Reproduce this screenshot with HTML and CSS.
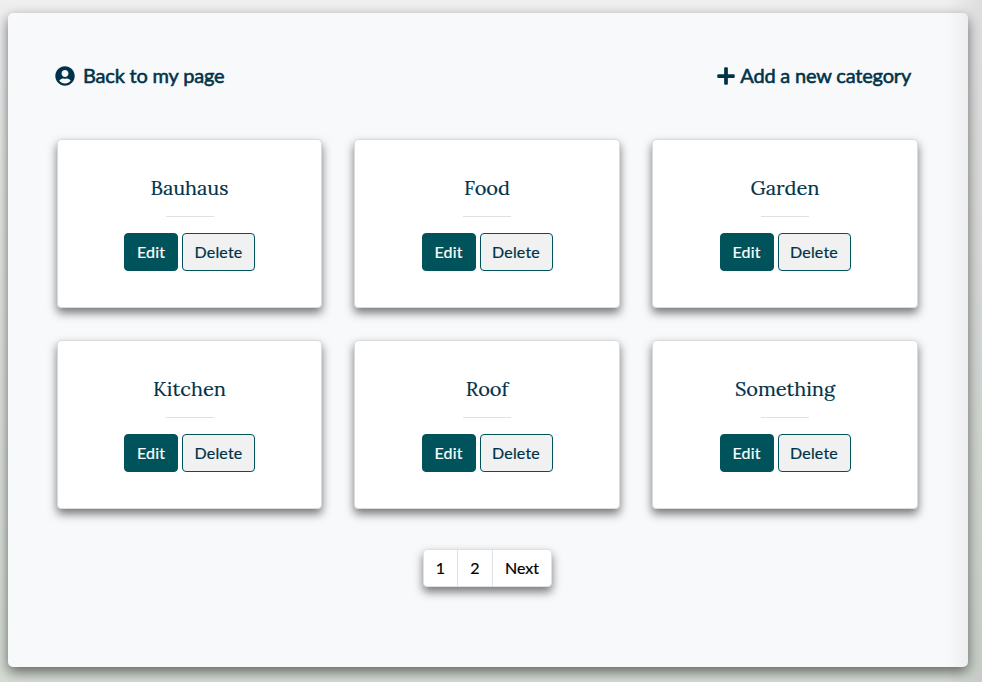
FILE: index.html
```html
<!DOCTYPE html>
<html lang="en">
<head>
<meta charset="utf-8">
<title>Categories</title>
<link rel="stylesheet" href="styles.css">
</head>
<body>
<main class="panel">
  <header class="toolbar">
    <a class="link link-back"><svg class="icon-user" viewBox="0 0 496 512"><path fill="currentColor" d="M248 8C111 8 0 119 0 256s111 248 248 248 248-111 248-248S385 8 248 8zm0 96c48.600 0 88 39.400 88 88s-39.400 88-88 88-88-39.400-88-88 39.400-88 88-88zm0 344c-58.700 0-111.300-26.600-146.500-68.200 18.800-35.400 55.600-59.800 98.500-59.800 2.400 0 4.800.4 7.100 1.100 13 4.200 26.600 6.900 40.900 6.900 14.300 0 28-2.700 40.900-6.900 2.300-.7 4.700-1.100 7.100-1.100 42.900 0 79.700 24.400 98.500 59.800C359.300 421.400 306.700 448 248 448z"/></svg><span class="link-text">Back to my page</span></a>
    <a class="link link-add"><svg class="icon-plus" viewBox="0 0 448 512"><path fill="currentColor" d="M416 208H272V64c0-17.670-14.330-32-32-32h-32c-17.670 0-32 14.330-32 32v144H32c-17.670 0-32 14.330-32 32v32c0 17.670 14.330 32 32 32h144v144c0 17.670 14.330 32 32 32h32c17.670 0 32-14.330 32-32V304h144c17.670 0 32-14.330 32-32v-32c0-17.670-14.330-32-32-32z"/></svg><span class="link-text">Add a new category</span></a>
  </header>
  <section class="cards">
    <article class="card"><h2 class="title">Bauhaus</h2><hr class="rule"><div class="actions"><a class="btn edit">Edit</a><a class="btn delete">Delete</a></div></article>
    <article class="card"><h2 class="title">Food</h2><hr class="rule"><div class="actions"><a class="btn edit">Edit</a><a class="btn delete">Delete</a></div></article>
    <article class="card"><h2 class="title">Garden</h2><hr class="rule"><div class="actions"><a class="btn edit">Edit</a><a class="btn delete">Delete</a></div></article>
    <article class="card"><h2 class="title">Kitchen</h2><hr class="rule"><div class="actions"><a class="btn edit">Edit</a><a class="btn delete">Delete</a></div></article>
    <article class="card"><h2 class="title">Roof</h2><hr class="rule"><div class="actions"><a class="btn edit">Edit</a><a class="btn delete">Delete</a></div></article>
    <article class="card"><h2 class="title">Something</h2><hr class="rule"><div class="actions"><a class="btn edit">Edit</a><a class="btn delete">Delete</a></div></article>
  </section>
  <nav class="pages"><a class="page">1</a><a class="page">2</a><a class="page next">Next</a></nav>
</main>
<div class="edge-shade"></div>
</body>
</html>
```
FILE: styles.css
```css
* { box-sizing: border-box; }
html { height: 100%; }
body {
  margin: 0;
  height: 682px;
  padding: 13px 14px 15px 8px;
  overflow: hidden;
  font-family: Lato, "Liberation Sans", sans-serif;
  font-size: 16px;
  line-height: 24px;
  color: #003349;
  background: linear-gradient(#efefef 0%, #e9ebe9 25%, #d6ddd5 100%);
}
.panel {
  height: 654px;
  padding: 48px 50px 0 49px;
  border-radius: 5px;
  background: #f8f9fb;
  box-shadow: 0 5px 13px rgba(0, 0, 0, .55);
}
.toolbar {
  display: flex;
  justify-content: space-between;
  height: 30px;
  padding-right: 7px;
  margin-left: -2px;
}
.link {
  display: flex;
  align-items: center;
  font-size: 20px;
  line-height: 28px;
  letter-spacing: -.19px;
  -webkit-text-stroke: .55px currentColor;
}
.link-text { padding-bottom: 2px; }
.link svg { display: block; stroke: none; }
.icon-user { width: 20px; height: 20px; margin-right: 8px; }
.icon-plus { width: 18px; height: 20px; margin-right: 5px; }
.cards {
  display: grid;
  grid-template-columns: 265px 266px 266px;
  grid-auto-rows: 169px;
  gap: 32px;
  margin-top: 48px;
}
.card {
  padding: 35px 0 0;
  border: 1px solid #dadbdc;
  border-radius: 4px;
  background: #fff;
  box-shadow: 0 5px 10px rgba(0, 0, 0, .52);
}
.title {
  margin: 0;
  height: 26px;
  font: 400 20px/26px Lora, "Liberation Serif", serif;
  text-align: center;
  -webkit-text-stroke: .2px currentColor;
}
.rule { width: 48px; height: 1px; margin: 15px auto 16px; border: 0; background: #dfe0e1; }
.actions { display: flex; justify-content: center; gap: 4px; }
.btn {
  height: 38px;
  border: 1px solid #00535a;
  border-radius: 4px;
  line-height: 35px;
  text-align: center;
  letter-spacing: .2px;
  -webkit-text-stroke: .2px currentColor;
}
.edit { width: 54px; background: #00535a; color: #fff; }
.delete { width: 73px; background: #f1f1f1; }
.pages {
  display: flex;
  width: 129px;
  height: 38px;
  margin: 40px 0 0 366px;
  border: 1px solid #dee2e6;
  border-radius: 4px;
  background: #fff;
  color: #000;
  box-shadow: 0 5px 10px rgba(0, 0, 0, .52);
}
.page {
  width: 35px;
  line-height: 35px;
  text-align: center;
  border-right: 1px solid #dee2e6;
  -webkit-text-stroke: .2px currentColor;
}
.page:first-child { width: 34px; }
.next { width: 58px; border: 0; }
.edge-shade {
  position: absolute;
  top: 0;
  right: 0;
  width: 36px;
  height: 682px;
  background: linear-gradient(90deg, transparent, rgba(0, 0, 0, .075));
}
```
